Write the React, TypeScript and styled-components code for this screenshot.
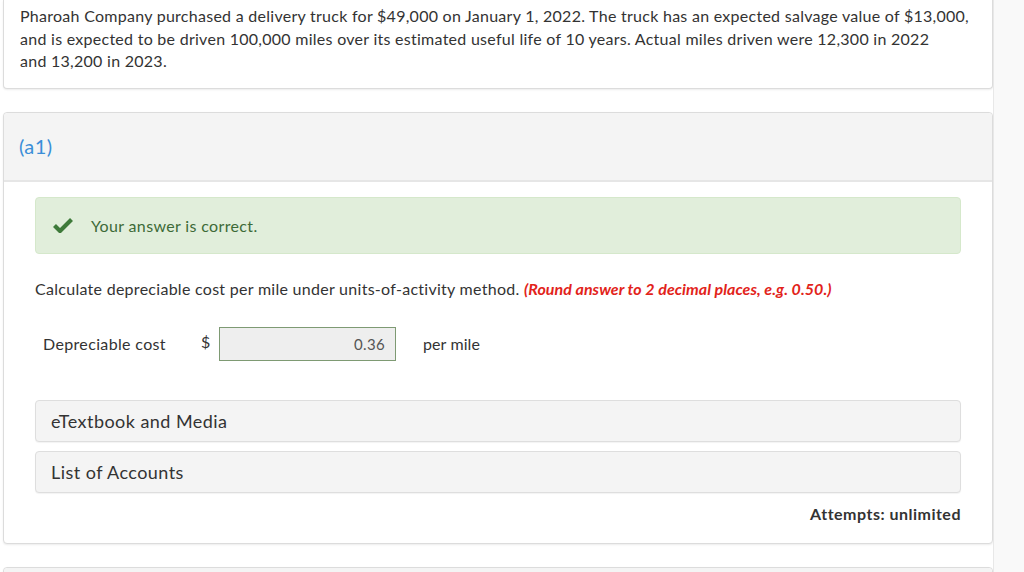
import React from 'react';
import styled, {createGlobalStyle} from 'styled-components';

const GlobalStyle = createGlobalStyle`
  html, body {
    margin: 0;
    padding: 0;
    background: #f9f9f9;
    font-family: Lato, "Noto Sans", sans-serif;
    color: #333;
  }
  * { box-sizing: border-box; }
`

const Page = styled.div`
  width: 994px;
  height: 572px;
  overflow: hidden;
  background: #fff;
  border-right: 1px solid #e8e8e8;
  padding: 0 0 0 3px;
  display: flex;
  flex-direction: column;
  gap: 23px;
`

const Card = styled.div<{ $top?: boolean }>`
  width: 990px;
  background: #fff;
  border: 1px solid #dcdcdc;
  border-top: ${p => p.$top ? 'none' : '1px solid #dcdcdc'};
  border-radius: ${p => p.$top ? '0 0 4px 4px' : '4px'};
  box-shadow: 0 1px 2px rgba(0, 0, 0, 0.08);
  flex-shrink: 0;
`

const Intro = styled.p`
  margin: 0;
  padding: 5px 10px 15px 16px;
  font-size: 16px;
  line-height: 22.5px;
  letter-spacing: 0.27px;
`

const PartHeader = styled.div`
  height: 69px;
  background: #f4f4f4;
  border-bottom: 2px solid #e6e6e6;
  display: flex;
  align-items: center;
  padding: 0 15px;
  font-size: 20px;
  letter-spacing: 0.4px;
  color: #3b8ed8;
  border-radius: 4px 4px 0 0;
`

const PartBody = styled.div`
  padding: 15px 31px 20px 31px;
  display: flex;
  flex-direction: column;
`

const Alert = styled.div`
  height: 57px;
  background: #e1eedb;
  border: 1px solid #d5e8cb;
  border-radius: 4px;
  display: flex;
  align-items: center;
  padding-left: 17px;
  gap: 18px;
  color: #3d6a37;
  font-size: 16px;
  letter-spacing: 0.35px;
`

const Question = styled.p`
  margin: 25px 0 0;
  font-size: 16px;
  line-height: 20px;
  letter-spacing: 0.28px;
`

const Hint = styled.span`
  color: #e2231a;
  font-weight: 700;
  font-style: italic;
  letter-spacing: 0.05px;
`

const AnswerRow = styled.div`
  display: flex;
  align-items: center;
  margin-top: 28px;
  padding-left: 8px;
  font-size: 16px;
  letter-spacing: 0.35px;
`

const Label = styled.span`
  width: 158px;
`

const Currency = styled.span`
  width: 18px;
  margin-top: -4px;
`

const Field = styled.div`
  width: 177px;
  height: 34px;
  background: #eee;
  border: 1px solid #7e9a73;
  display: flex;
  align-items: center;
  justify-content: flex-end;
  padding-right: 10px;
  font-size: 15px;
  color: #555;
`

const Unit = styled.span`
  margin-left: 27px;
  letter-spacing: 0.1px;
`

const Panels = styled.div`
  display: flex;
  flex-direction: column;
  gap: 9px;
  margin-top: 39px;
`

const Panel = styled.div`
  height: 42px;
  background: #f4f4f4;
  border: 1px solid #dedede;
  border-radius: 4px;
  box-shadow: 0 1px 1px rgba(0, 0, 0, 0.05);
  display: flex;
  align-items: center;
  padding-left: 15px;
  font-size: 18px;
  letter-spacing: 0.45px;
`

const Attempts = styled.div`
  text-align: right;
  font-weight: 700;
  font-size: 16px;
  letter-spacing: 0.5px;
  margin-top: 11px;
`

const Check = () => (
  <svg width="20" height="16" viewBox="0 0 20 16">
    <path d="M1.5 8.5 L7 14 L18.5 2.5" fill="none" stroke="#3e7a3a" strokeWidth="4.2" strokeLinejoin="miter"/>
  </svg>
)

export default function App() {
  return (
    <>
      <GlobalStyle/>
      <Page>
        <Card $top>
          <Intro>
            Pharoah Company purchased a delivery truck for $49,000 on January 1, 2022. The truck has an expected salvage value of $13,000,
            <br/>and is expected to be driven 100,000 miles over its estimated useful life of 10 years. Actual miles driven were 12,300 in 2022
            <br/>and 13,200 in 2023.
          </Intro>
        </Card>
        <Card>
          <PartHeader>(a1)</PartHeader>
          <PartBody>
            <Alert>
              <Check/>
              <span>Your answer is correct.</span>
            </Alert>
            <Question>
              Calculate depreciable cost per mile under units-of-activity method. <Hint>(Round answer to 2 decimal places, e.g. 0.50.)</Hint>
            </Question>
            <AnswerRow>
              <Label>Depreciable cost</Label>
              <Currency>$</Currency>
              <Field>0.36</Field>
              <Unit>per mile</Unit>
            </AnswerRow>
            <Panels>
              <Panel>eTextbook and Media</Panel>
              <Panel>List of Accounts</Panel>
            </Panels>
            <Attempts>Attempts: unlimited</Attempts>
          </PartBody>
        </Card>
        <Card>
          <PartHeader/>
        </Card>
      </Page>
    </>
  );
}
